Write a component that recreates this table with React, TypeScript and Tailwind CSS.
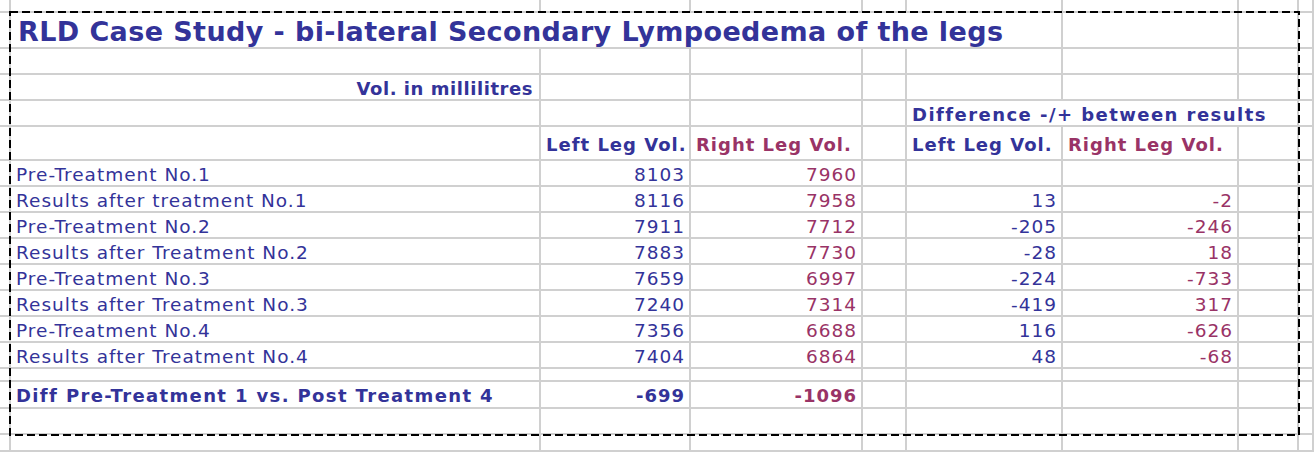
import React from 'react';
import clsx from 'clsx';

// spreadsheet rows: label, left vol, right vol, diff left, diff right
const results: [string, number, number, number | null, number | null][] = [
  ['Pre-Treatment No.1', 8103, 7960, null, null],
  ['Results after treatment No.1', 8116, 7958, 13, -2],
  ['Pre-Treatment No.2', 7911, 7712, -205, -246],
  ['Results after Treatment No.2', 7883, 7730, -28, 18],
  ['Pre-Treatment No.3', 7659, 6997, -224, -733],
  ['Results after Treatment No.3', 7240, 7314, -419, 317],
  ['Pre-Treatment No.4', 7356, 6688, 116, -626],
  ['Results after Treatment No.4', 7404, 6864, 48, -68],
];

const blue = 'text-[#333399]';
const plum = 'text-[#993366]';
const body = 'text-[18.5px] leading-[20px] tracking-[1px]';
const bold = 'text-[18px] leading-[20px] tracking-[1px] font-bold';

const Cell = ({ children, className }: { children?: React.ReactNode; className?: string }) => (
  <div className={clsx('flex items-end whitespace-nowrap border-r-2 border-b-2 border-[#d0d0d0]', className)}>
    {children}
  </div>
);

// empty cells, one per column
const Blank = ({ n }: { n: number }) => (
  <>
    {Array.from({ length: n }).map((_, i) => (
      <Cell key={i} />
    ))}
  </>
);

const Num = ({ value, color }: { value: number | null; color: string }) => (
  <Cell className={clsx('justify-end pr-[4px]', body, color)}>{value ?? ''}</Cell>
);

export default function App() {
  return (
    <div className="relative w-[1314px] h-[452px] overflow-hidden bg-white font-['DejaVu_Sans',sans-serif]">
      <div className="grid grid-cols-[11px_530px_150px_172px_44px_156px_176px_60px_15px] grid-rows-[13px_36px_26px_26px_26px_34px_repeat(8,26px)_13px_27px_26px_17px]">
        {/* row above the selection */}
        <Blank n={9} />

        {/* title */}
        <Cell />
        <Cell className={clsx('col-span-5 pl-[7px] text-[27px] leading-[30px] tracking-[0.4px] font-bold', blue)}>
          RLD Case Study - bi-lateral Secondary Lympoedema of the legs
        </Cell>
        <Blank n={3} />

        <Blank n={9} />

        {/* units */}
        <Cell />
        <Cell className={clsx('justify-end pr-[6px] text-[18px] leading-[20px] tracking-[0.55px] font-bold', blue)}>
          Vol. in millilitres
        </Cell>
        <Blank n={7} />

        {/* difference caption */}
        <Blank n={5} />
        <Cell className={clsx('col-span-3 pl-[5px] text-[18px] leading-[20px] tracking-[1.45px] font-bold', blue)}>
          Difference -/+ between results
        </Cell>
        <Cell />

        {/* column headers */}
        <Blank n={2} />
        <Cell className={clsx('pl-[5px] pb-[4px]', bold, blue)}>Left Leg Vol.</Cell>
        <Cell className={clsx('pl-[5px] pb-[4px] tracking-[1.2px]', bold, plum)}>Right Leg Vol.</Cell>
        <Cell />
        <Cell className={clsx('pl-[5px] pb-[4px]', bold, blue)}>Left Leg Vol.</Cell>
        <Cell className={clsx('pl-[5px] pb-[4px] tracking-[1.2px]', bold, plum)}>Right Leg Vol.</Cell>
        <Blank n={2} />

        {results.map(([label, left, right, dLeft, dRight]) => (
          <React.Fragment key={label}>
            <Cell />
            <Cell className={clsx('pl-[5px]', body, blue)}>{label}</Cell>
            <Num value={left} color={blue} />
            <Num value={right} color={plum} />
            <Cell />
            <Num value={dLeft} color={blue} />
            <Num value={dRight} color={plum} />
            <Blank n={2} />
          </React.Fragment>
        ))}

        <Blank n={9} />

        {/* totals */}
        <Cell />
        <Cell className={clsx('pl-[5px] pb-[1px] text-[18px] leading-[20px] tracking-[1.37px] font-bold', blue)}>
          Diff Pre-Treatment 1 vs. Post Treatment 4
        </Cell>
        <Cell className={clsx('justify-end pr-[4px] pb-[1px]', bold, blue)}>-699</Cell>
        <Cell className={clsx('justify-end pr-[4px] pb-[1px]', bold, plum)}>-1096</Cell>
        <Blank n={5} />

        <Blank n={9} />
        <Blank n={9} />
      </div>

      {/* copy marquee around the selected range */}
      <svg className="absolute left-0 top-0 pointer-events-none" width="1314" height="452">
        <rect x="10" y="12" width="1289" height="423" fill="none" stroke="#000" strokeWidth="2" strokeDasharray="8 4" />
      </svg>
    </div>
  );
}
